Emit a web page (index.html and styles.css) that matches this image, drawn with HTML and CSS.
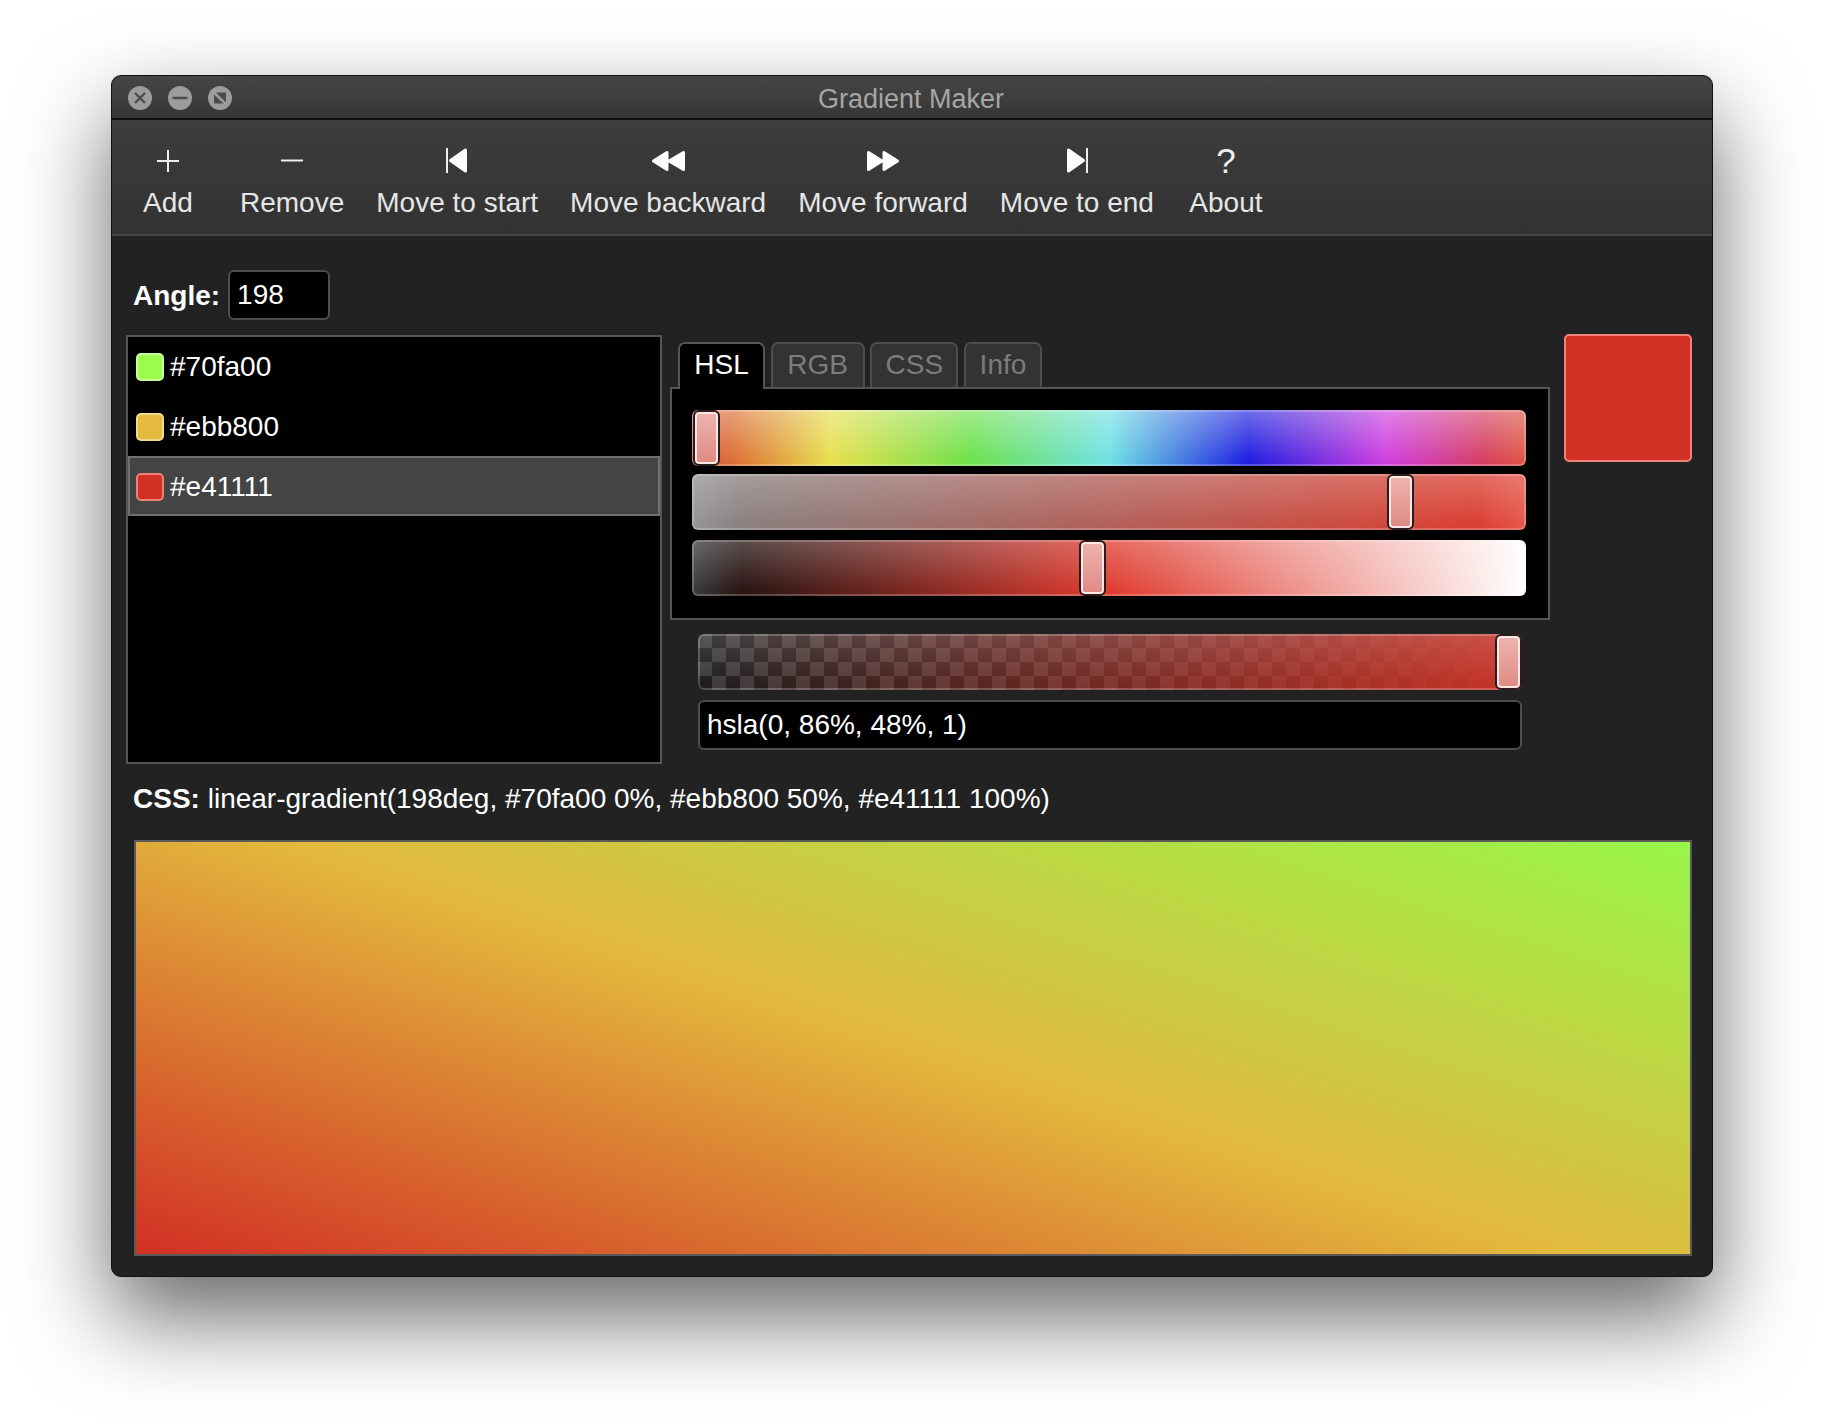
FILE: index.html
```html
<!DOCTYPE html>
<html lang="en">
<head>
	<meta charset="UTF-8">
	<title>Gradient Maker</title>
	<link rel="stylesheet" href="styles.css">
</head>
<body>
	<div class="window">
		<div class="titlebar">
			<div class="lights">
				<svg class="light" viewBox="0 0 24 24"><circle cx="12" cy="12" r="12" fill="#9c9c9c"/><path d="M7 7l10 10M17 7L7 17" stroke="#4c4c4c" stroke-width="2.400"/></svg>
				<svg class="light" viewBox="0 0 24 24"><circle cx="12" cy="12" r="12" fill="#9c9c9c"/><path d="M4.500 12h15" stroke="#4c4c4c" stroke-width="2.400"/></svg>
				<svg class="light" viewBox="0 0 24 24"><circle cx="12" cy="12" r="12" fill="#9c9c9c"/><path d="M8 6.500h10V16.500zM6 8.500v9h9.500z" fill="#4c4c4c"/></svg>
			</div>
			<div class="title">Gradient Maker</div>
		</div>

		<div class="toolbar">
			<div class="tool">
				<svg class="icon" width="24" height="26" viewBox="0 0 24 26"><path d="M12 2v22M1 13h22" stroke="#eee" stroke-width="2" fill="none"/></svg>
				<span>Add</span>
			</div>
			<div class="tool">
				<svg class="icon" width="24" height="26" viewBox="0 0 24 26"><path d="M1 12.500h22" stroke="#eee" stroke-width="2" fill="none"/></svg>
				<span>Remove</span>
			</div>
			<div class="tool">
				<svg class="icon" width="22" height="26" viewBox="0 0 22 26"><path d="M1 0v25" stroke="#eee" stroke-width="2"/><path d="M19.500 2v21L4.500 12.500z" fill="#fff" stroke="#fff" stroke-width="3" stroke-linejoin="round"/></svg>
				<span>Move to start</span>
			</div>
			<div class="tool">
				<svg class="icon" width="34" height="26" viewBox="0 0 34 26"><path d="M16 4.500v17L2.500 13zM32.500 4.500v17L18 13z" fill="#fff" stroke="#fff" stroke-width="3" stroke-linejoin="round"/></svg>
				<span>Move backward</span>
			</div>
			<div class="tool">
				<svg class="icon" width="34" height="26" viewBox="0 0 34 26"><path d="M2.500 4.500v17L16 13zM18 4.500v17L31.500 13z" fill="#fff" stroke="#fff" stroke-width="3" stroke-linejoin="round"/></svg>
				<span>Move forward</span>
			</div>
			<div class="tool">
				<svg class="icon" width="22" height="26" viewBox="0 0 22 26"><path d="M21 0v25" stroke="#eee" stroke-width="2"/><path d="M2.500 2v21L17.500 12.500z" fill="#fff" stroke="#fff" stroke-width="3" stroke-linejoin="round"/></svg>
				<span>Move to end</span>
			</div>
			<div class="tool">
				<div class="icon question">?</div>
				<span>About</span>
			</div>
		</div>

		<div class="content">
			<div class="angle-row">
				<b>Angle:</b>
				<input class="field angle" value="198">
			</div>

			<div class="editor">
				<ul class="stops">
					<li><i class="swatch green"></i>#70fa00</li>
					<li><i class="swatch yellow"></i>#ebb800</li>
					<li class="selected"><i class="swatch red"></i>#e41111</li>
				</ul>

				<div class="middle">
					<ul class="tabs">
						<li class="active">HSL</li>
						<li>RGB</li>
						<li>CSS</li>
						<li>Info</li>
					</ul>
					<div class="pane">
						<div class="slider hue"><div class="handle" style="left: 1px"></div></div>
						<div class="slider sat"><div class="handle" style="left: 695px"></div></div>
						<div class="slider light-bar"><div class="handle" style="left: 387px"></div></div>
					</div>
					<div class="under">
						<div class="slider alpha"><div class="handle" style="left: 797px"></div></div>
						<input class="field hsla" value="hsla(0, 86%, 48%, 1)">
					</div>
				</div>

				<div class="current"></div>
			</div>

			<p class="css-line"><b>CSS:</b> linear-gradient(198deg, #70fa00 0%, #ebb800 50%, #e41111 100%)</p>
			<div class="preview"></div>
		</div>
	</div>
</body>
</html>
```

FILE: styles.css
```css
*{
	margin: 0;
	padding: 0;
	box-sizing: border-box;
}
ul{
	list-style: none;
}
body{
	width: 1824px;
	height: 1424px;
	background: #fff;
	padding: 75px 0 0 111px;
	overflow: hidden;
	font: 28px/32px "Liberation Sans", Arial, sans-serif;
	color: #fff;
}
.window{
	width: 1602px;
	height: 1202px;
	background: #222;
	border: 1px solid #111;
	border-radius: 10px;
	overflow: hidden;
	box-shadow: 0 40px 90px rgba(0,0,0,.6);
}

/* title bar */
.titlebar{
	height: 44px;
	background: linear-gradient(#454545, #363636);
	border-bottom: 2px solid #111;
	padding-top: 4px;
	display: flex;
	align-items: center;
	justify-content: center;
	position: relative;
}
.lights{
	position: absolute;
	left: 16px;
	top: 10px;
	display: flex;
	gap: 16px;
}
.light{
	width: 24px;
	height: 24px;
	display: block;
}
.title{
	font-size: 27px;
	color: #a6a6a6;
	margin-right: 2px;
}

/* toolbar */
.toolbar{
	height: 116px;
	background: linear-gradient(#3d3d3d, #323232);
	border-bottom: 2px solid #444;
	padding-top: 28px;
	display: flex;
	color: #e6e6e6;
}
.tool{
	padding: 0 16px;
	display: flex;
	flex-direction: column;
	align-items: center;
	white-space: nowrap;
}
.tool span{
	min-width: 80px;
	text-align: center;
}
.icon{
	height: 26px;
	margin-bottom: 13px;
	display: block;
}
.question{
	font-size: 35px;
	line-height: 26px;
	color: #eee;
}

/* main area */
.content{
	padding: 34px 20px 0 14px;
}
.angle-row{
	height: 50px;
	padding-left: 7px;
	display: flex;
	align-items: center;
	gap: 8px;
}
.angle-row b{
	padding-top: 2px;
}
.field{
	height: 50px;
	background: #000;
	border: 2px solid #4d4d4d;
	border-radius: 6px;
	color: #fff;
	font: inherit;
	padding-left: 7px;
	outline: none;
	display: block;
}
.angle{
	width: 102px;
}
.editor{
	margin-top: 15px;
	display: flex;
	align-items: flex-start;
}

/* stop list */
.stops{
	width: 536px;
	height: 429px;
	background: #000;
	border: 2px solid #555;
	margin-right: 8px;
}
.stops li{
	height: 60px;
	padding-left: 8px;
	display: flex;
	align-items: center;
	gap: 6px;
}
.stops .selected{
	margin-top: -1px;
	background: #444;
	border: 2px solid #707070;
	padding: 2px 0 0 6px;
}
.swatch{
	width: 28px;
	height: 28px;
	border-radius: 5px;
	border: 2px solid;
}
.green{
	background: #9cfb4c;
	border-color: #c8fca0;
}
.yellow{
	background: #e3b93f;
	border-color: #f2d98c;
}
.red{
	background: #d13125;
	border-color: #ee8278;
}

/* tabs */
.middle{
	width: 880px;
	margin-right: 14px;
	padding-top: 7px;
}
.tabs{
	display: flex;
	padding-left: 8px;
	gap: 5.670px;
	height: 45px;
}
.tabs li{
	height: 45px;
	background: #333;
	border: 2px solid #4d4d4d;
	border-bottom: 0;
	border-radius: 7px 7px 0 0;
	color: #7c7c7c;
	line-height: 41px;
	text-align: center;
}
.tabs li:nth-child(1){
	width: 87px;
}
.tabs li:nth-child(2){
	width: 94px;
}
.tabs li:nth-child(3){
	width: 88px;
}
.tabs li:nth-child(4){
	width: 78px;
}
.tabs .active{
	background: #000;
	border-color: #555;
	color: #fff;
	height: 47px;
	position: relative;
	z-index: 1;
}
.pane{
	height: 233px;
	background: #000;
	border: 2px solid #555;
	padding: 21px 0 0 20px;
}

/* sliders */
.slider{
	width: 834px;
	height: 56px;
	border-radius: 6px;
	position: relative;
	margin-bottom: 8px;
	box-shadow: inset 0 0 0 2px rgba(255,255,255,.22);
}
.slider.light-bar{
	margin-top: 10px;
}
.hue{
	background:
		linear-gradient(to right, rgba(255,255,255,.12), rgba(255,255,255,0) 5%, rgba(255,255,255,0) 95%, rgba(255,255,255,.12)),
		linear-gradient(rgba(255,255,255,.34), rgba(255,255,255,0) 90%),
		linear-gradient(to right, #d9402c 0%, #e8e050 16.700%, #6fe14c 33.300%, #70e2e4 50%, #2020e0 66.700%, #d040e0 83.300%, #d9402c 100%);
}
.sat{
	background:
		linear-gradient(to right, rgba(255,255,255,.14), rgba(255,255,255,0) 6%, rgba(255,255,255,0) 94%, rgba(255,255,255,.14)),
		linear-gradient(rgba(255,255,255,.22), rgba(255,255,255,0) 90%),
		linear-gradient(to right, #858585, #e03c2e);
}
.light-bar{
	background:
		linear-gradient(to right, rgba(255,255,255,.18), rgba(255,255,255,0) 6%),
		linear-gradient(rgba(255,255,255,.24), rgba(255,255,255,0) 90%),
		linear-gradient(to right, #101010, #e03c30 50%, #fff 100%);
}
.alpha{
	width: 824px;
	background:
		linear-gradient(rgba(255,255,255,.14), rgba(255,255,255,0) 90%),
		linear-gradient(to right, rgba(200,50,40,0), #c83428),
		repeating-conic-gradient(#1e1e1e 0 25%, #3c3c3c 0 50%) 0 0/28px 28px;
}
.handle{
	position: absolute;
	top: 0;
	width: 27px;
	height: 56px;
	border: 2px solid #2a1c1c;
	border-radius: 6px;
	background: linear-gradient(#eeb4ae, #e08a84);
	box-shadow: inset 0 0 0 2px #fbe8e6;
}
.under{
	padding: 14px 0 0 28px;
}
.under .slider{
	margin-bottom: 10px;
}
.hsla{
	width: 824px;
}
.current{
	width: 128px;
	height: 128px;
	margin-top: -1px;
	background: #d13125;
	border: 2px solid #ee8278;
	border-radius: 5px;
}

/* css output and preview */
.css-line{
	margin-top: 19px;
	padding-left: 7px;
	height: 57px;
}
.preview{
	width: 1558px;
	height: 416px;
	margin-left: 8px;
	border: 2px solid #5a5a5a;
	background: linear-gradient(198deg, #98f64a 0%, #e3b83d 50%, #d13024 100%);
}
```
